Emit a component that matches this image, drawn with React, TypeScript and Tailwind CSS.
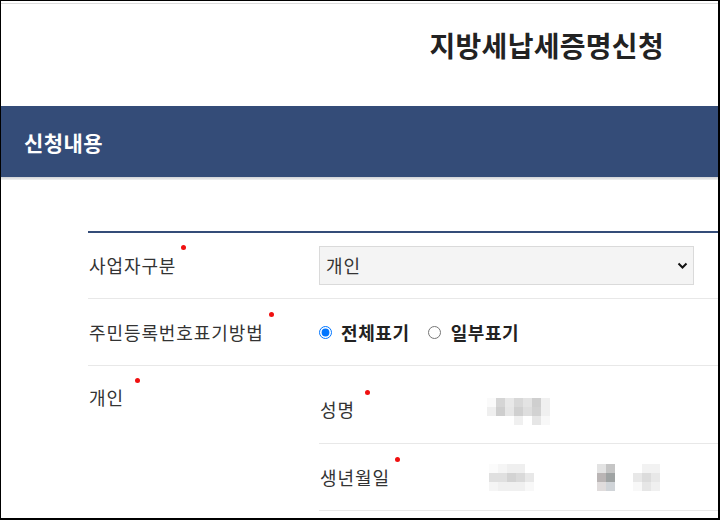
import React from "react";

const FONT = "font-['Noto_Sans_CJK_KR','Noto_Sans',sans-serif]";

// blurred (mosaic) placeholders for masked personal info
const nameBlur = [
  ["bg-[#fafafa]", "bg-[#d5d5d5]", "bg-[#e8e8e8]", "bg-[#d8d8d8]", "bg-[#e3e3e3]", "bg-[#cfcfcf]", "bg-[#f0f0f0]"],
  ["bg-[#efefef]", "bg-[#cecece]", "bg-[#e6e6e6]", "bg-[#d0d0d0]", "bg-[#dedede]", "bg-[#d2d2d2]", "bg-[#f0f0f0]"],
  ["bg-white", "bg-white", "bg-white", "bg-[#f0f0f0]", "bg-white", "bg-[#e6e6e6]", "bg-[#f8f8f8]"],
];

const birthBlurA = [
  ["bg-[#fbfbfb]", "bg-[#f5f5f5]", "bg-[#efefef]", "bg-[#efefef]", "bg-white"],
  ["bg-[#e0e0e0]", "bg-[#e0e0e0]", "bg-[#d3d3d3]", "bg-[#dadada]", "bg-[#e8e8e8]"],
  ["bg-[#f5f5f5]", "bg-[#f0f0f0]", "bg-[#f0f0f0]", "bg-[#f0f0f0]", "bg-[#f8f8f8]"],
];

const birthBlurB = [
  ["bg-[#e3e3e3]", "bg-[#c5c5c5]"],
  ["bg-[#bab5b5]", "bg-[#9fa3a3]"],
  ["bg-[#e0dcdc]", "bg-[#d0d4d8]"],
];

const birthBlurC = [
  ["bg-white", "bg-[#f2f2f2]", "bg-[#f2f2f2]"],
  ["bg-[#e8e8e8]", "bg-[#dcdcdc]", "bg-[#e8e8e8]"],
  ["bg-[#f8f8f8]", "bg-[#e6e6e6]", "bg-[#f0f0f0]"],
];

function Mosaic({ cells }: { cells: string[][] }) {
  return (
    <div className="flex flex-col">
      {cells.map((row, i) => (
        <div key={i} className="flex">
          {row.map((c, j) => (
            <div key={j} className={"w-[9px] h-[9px] " + c} />
          ))}
        </div>
      ))}
    </div>
  );
}

// label with the red "required" dot
function Label({ text, dot }: { text: string; dot: string }) {
  return (
    <span className="relative inline-block text-[18px] leading-[24px] tracking-[0.9px] text-[#333]">
      {text}
      <span className={"absolute w-[5px] h-[5px] rounded-full bg-[#f01010] " + dot} />
    </span>
  );
}

export default function App() {
  return (
    <div
      className={
        "w-[720px] h-[520px] overflow-hidden bg-white border-t border-l border-r-2 border-b-2 border-black " +
        FONT
      }
    >
      <div className="h-[2px]" />
      <div className="h-px bg-[#dcdcdc]" />

      {/* page title */}
      <div className="h-[102px] flex justify-end pr-[54px] pt-[23px]">
        <h1 className="text-[28px] leading-[36px] font-bold text-[#222] tracking-[0.3px]">
          지방세납세증명신청
        </h1>
      </div>

      {/* section band */}
      <div className="h-[71px] bg-[#344c78] flex items-center pl-[23px]">
        <h2 className="text-[21px] leading-[28px] font-bold text-white tracking-[0.4px]">신청내용</h2>
      </div>
      <div className="h-[3px] bg-gradient-to-b from-[#cfd2d6] to-[#f2f2f2]" />

      {/* form table */}
      <div className="mt-[51px] ml-[87px] border-t-2 border-[#344c78]">
        <div className="h-[66px] flex items-center border-b border-[#e8e8e8]">
          <div className="w-[231px] pl-px">
            <Label text="사업자구분" dot="left-[92px] -top-[8px]" />
          </div>
          <div className="relative w-[375px] h-[39px]">
            <select className="w-full h-full appearance-none bg-[#f4f4f4] border border-[#dadada] pl-[6px] text-[18px] tracking-[0.9px] text-[#333] outline-none">
              <option>개인</option>
            </select>
            <svg
              className="absolute right-[6px] top-[16px] pointer-events-none"
              width="11"
              height="8"
              viewBox="0 0 11 8"
            >
              <path d="M1.5 1.5 L5.5 5.5 L9.5 1.5" fill="none" stroke="#111" strokeWidth="2" />
            </svg>
          </div>
        </div>

        <div className="h-[67px] flex items-center border-b border-[#e8e8e8]">
          <div className="w-[231px] pl-px">
            <Label text="주민등록번호표기방법" dot="left-[180px] -top-[8px]" />
          </div>
          <div className="flex items-center text-[18px] leading-[24px] tracking-[0.6px] font-bold text-[#222]">
            <label className="flex items-center">
              <input type="radio" name="rrn" defaultChecked className="m-0 w-[13px] h-[13px] accent-[#0075ff]" />
              <span className="ml-[9px]">전체표기</span>
            </label>
            <label className="flex items-center ml-[18px]">
              <input type="radio" name="rrn" className="m-0 w-[13px] h-[13px]" />
              <span className="ml-[10px]">일부표기</span>
            </label>
          </div>
        </div>

        <div className="flex items-start">
          <div className="w-[231px] pl-px pt-[19px]">
            <Label text="개인" dot="left-[46px] -top-[7px]" />
          </div>
          <div className="flex-1 pt-[10px]">
            <div className="h-[68px] flex items-center border-b border-[#e8e8e8]">
              <div className="w-[168px] pl-px">
                <Label text="성명" dot="left-[45px] -top-[7px]" />
              </div>
              <div className="mt-[3px]">
                <Mosaic cells={nameBlur} />
              </div>
            </div>
            <div className="h-[67px] flex items-center border-b border-[#e8e8e8]">
              <div className="w-[170px] pl-px">
                <Label text="생년월일" dot="left-[75px] -top-[8px]" />
              </div>
              <Mosaic cells={birthBlurA} />
              <div className="ml-[63px]">
                <Mosaic cells={birthBlurB} />
              </div>
              <div className="ml-[18px]">
                <Mosaic cells={birthBlurC} />
              </div>
            </div>
          </div>
        </div>
      </div>
    </div>
  );
}
